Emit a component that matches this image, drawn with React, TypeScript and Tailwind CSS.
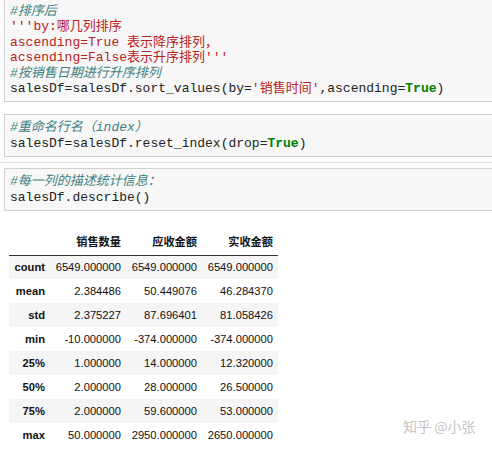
const mono = 'font-["Liberation_Mono","Noto_Sans_CJK_SC",monospace]';

const Cell = ({ children, className = '' }: { children: React.ReactNode; className?: string }) => (
  <div
    className={`ml-[4px] border-y border-l border-[#cfcfcf] bg-[#f7f7f7] px-[5px] py-[5px] text-[13px] leading-[15.4px] text-[#222] whitespace-pre ${mono} ${className}`}
  >
    {children}
  </div>
);

const C = ({ children }: { children: React.ReactNode }) => <span className="italic text-[#408080]">{children}</span>;
const S = ({ children }: { children: React.ReactNode }) => <span className="text-[#ba2121]">{children}</span>;
const K = ({ children }: { children: React.ReactNode }) => <span className="font-bold text-[#008000]">{children}</span>;

const rows: [string, string, string, string][] = [
  ['count', '6549.000000', '6549.000000', '6549.000000'],
  ['mean', '2.384486', '50.449076', '46.284370'],
  ['std', '2.375227', '87.696401', '81.058426'],
  ['min', '-10.000000', '-374.000000', '-374.000000'],
  ['25%', '1.000000', '14.000000', '12.320000'],
  ['50%', '2.000000', '28.000000', '26.500000'],
  ['75%', '2.000000', '59.600000', '53.000000'],
  ['max', '50.000000', '2950.000000', '2650.000000'],
];

export default function App() {
  return (
    <div className="relative w-[492px] h-[450px] overflow-hidden bg-white">
      <Cell className="-mt-[2px]">
        <div><C>#排序后</C></div>
        <div><S>'''by:哪几列排序</S></div>
        <div><S>ascending=True 表示降序排列，</S></div>
        <div><S>acsending=False表示升序排列'''</S></div>
        <div><C>#按销售日期进行升序排列</C></div>
        <div>
          salesDf=salesDf.sort_values(by=<S>'销售时间'</S>,ascending=<K>True</K>)
        </div>
      </Cell>

      <Cell className="mt-[12px]">
        <div><C>#重命名行名（index）</C></div>
        <div>
          salesDf=salesDf.reset_index(drop=<K>True</K>)
        </div>
      </Cell>

      <div className="mt-[5px] h-px bg-[#e2e2e2]" />

      <Cell className="mt-[5px]">
        <div><C>#每一列的描述统计信息：</C></div>
        <div>salesDf.describe()</div>
      </Cell>

      <table className='mt-[20px] ml-[9px] table-fixed border-collapse text-[11.2px] text-[#111] font-["Liberation_Sans","Noto_Sans_CJK_SC",sans-serif]'>
        <thead>
          <tr className="h-[24px] border-b border-[#333]">
            <th className="w-[41px]" />
            <th className="w-[76px] px-[5px] text-right font-bold">销售数量</th>
            <th className="w-[76px] px-[5px] text-right font-bold">应收金额</th>
            <th className="w-[76px] px-[5px] text-right font-bold">实收金额</th>
          </tr>
        </thead>
        <tbody>
          {rows.map((r, i) => (
            <tr key={r[0]} className={`h-[24px] ${i % 2 === 0 ? 'bg-[#f5f5f5]' : 'bg-white'}`}>
              <th className="px-[5px] text-right font-bold">{r[0]}</th>
              <td className="px-[5px] text-right">{r[1]}</td>
              <td className="px-[5px] text-right">{r[2]}</td>
              <td className="px-[5px] text-right">{r[3]}</td>
            </tr>
          ))}
        </tbody>
      </table>

      <div className='absolute left-[403px] top-[416px] text-[14px] text-[#c4c4c4] font-["Noto_Sans_CJK_SC",sans-serif]'>
        知乎 @小张
      </div>
    </div>
  );
}
